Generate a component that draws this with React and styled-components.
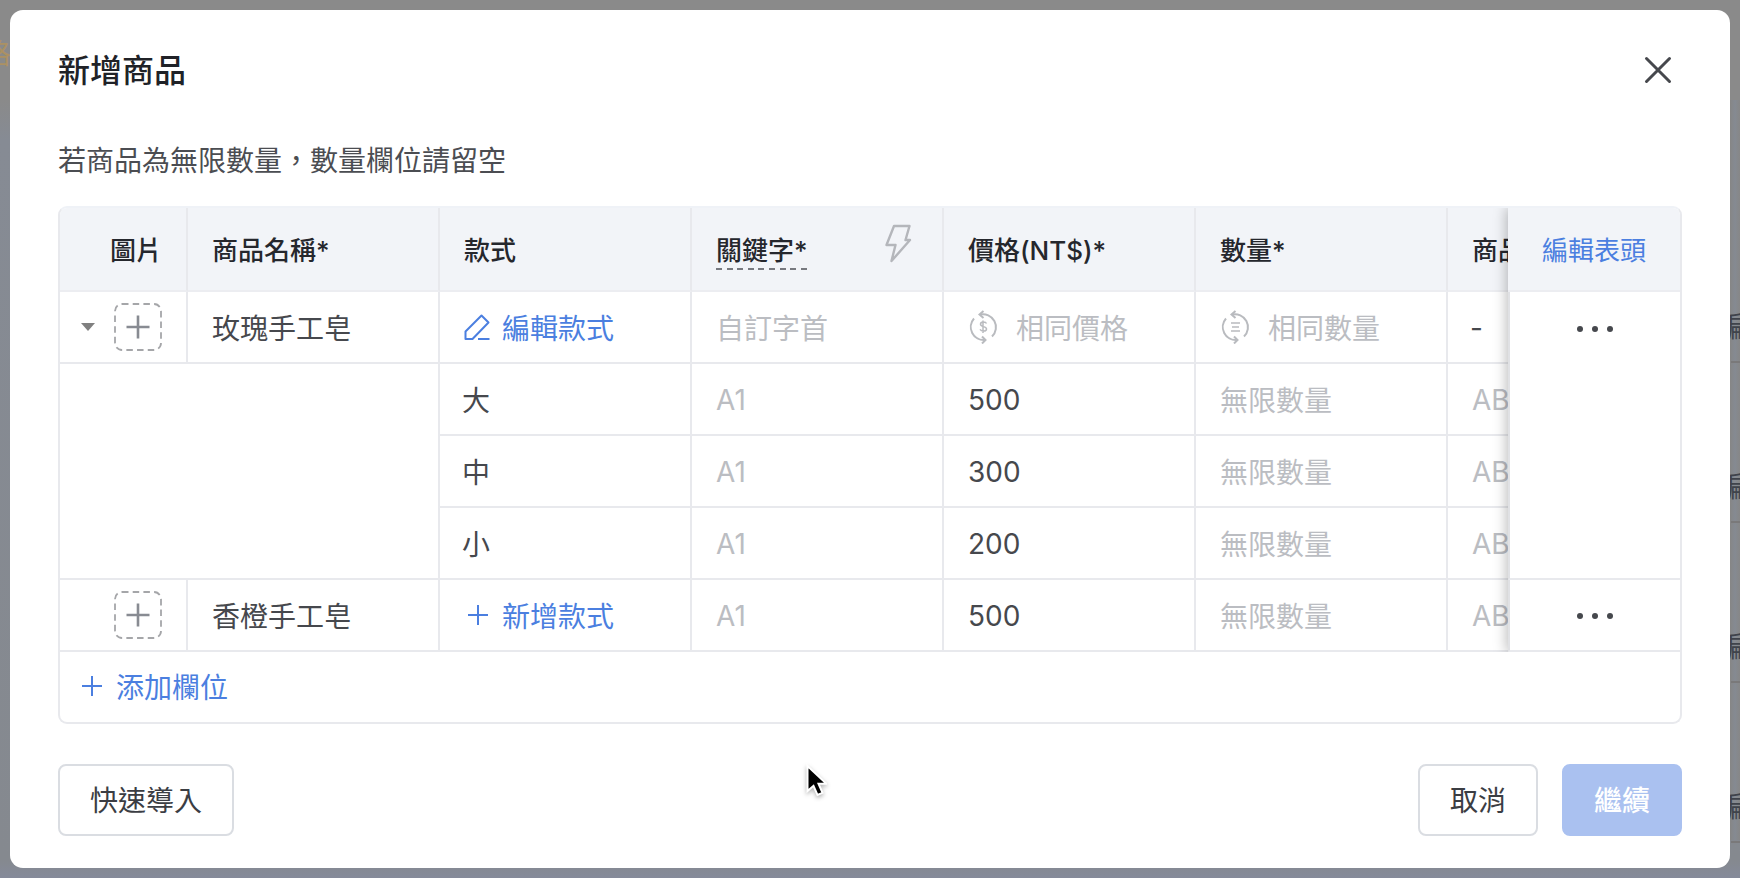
import styled, { createGlobalStyle, css } from "styled-components";

const GlobalStyle = createGlobalStyle`
  * {
    box-sizing: border-box;
  }
  body {
    margin: 0;
    overflow: hidden;
    font-family: Inter, "Noto Sans CJK TC", sans-serif;
  }
  button {
    font-family: inherit;
    cursor: pointer;
  }
`;

const Overlay = styled.div`
  position: relative;
  width: 1740px;
  height: 878px;
  padding: 10px;
  overflow: hidden;
  background: linear-gradient(#8a8a8a 0, #8a8a8a 100px, #868b94 140px, #85898f 860px, #858a9a 100%);
`;

const Behind = styled.div`
  position: absolute;
  top: ${({ $top }) => $top}px;
  left: ${({ $left }) => $left}px;
  font-size: 28px;
  line-height: 28px;
  white-space: nowrap;
  color: ${({ $color }) => $color || "#3f434b"};
`;

const BehindSide = styled.div`
  position: absolute;
  top: 100px;
  right: 0;
  width: 10px;
  height: 740px;
  background: linear-gradient(90deg, #868686, #858a92 50%, #878787);
`;

const BehindLine = styled.div`
  position: absolute;
  top: ${({ $top }) => $top}px;
  right: 0;
  width: 9px;
  height: 2px;
  background: #7a797a;
`;

const Modal = styled.div`
  position: relative;
  display: flex;
  flex-direction: column;
  width: 1720px;
  height: 858px;
  padding: 37px 48px 32px;
  border-radius: 13px;
  background: #fff;
`;

const Header = styled.div`
  display: flex;
  align-items: center;
  justify-content: space-between;
  height: 48px;
  h1 {
    margin: 0;
    font-size: 32px;
    line-height: 48px;
    font-weight: 500;
    color: #202227;
  }
`;

const CloseButton = styled.button`
  display: flex;
  padding: 0;
  margin: -2px 9px 0 0;
  border: none;
  background: none;
  color: #46484d;
`;

const Hint = styled.p`
  margin: 44px 0 23px;
  font-size: 28px;
  line-height: 44px;
  color: #4b4d52;
`;

const Table = styled.div`
  height: 518px;
  border: 2px solid #e8e9ed;
  border-top-color: #eff2f7;
  border-radius: 9px;
  overflow: hidden;
`;

const Columns = styled.div`
  display: flex;
  height: 444px;
`;

const Scroll = styled.div`
  width: 1448px;
  overflow: hidden;
`;

const Grid = styled.div`
  display: grid;
  grid-template-columns: 128px repeat(6, 252px);
  grid-template-rows: 84px repeat(5, 72px);
  width: 1640px;
`;

const Cell = styled.div`
  display: flex;
  align-items: center;
  padding: 0 24px;
  border-right: 2px solid #e8e9ed;
  border-bottom: 2px solid #e8e9ed;
  font-size: 28px;
  white-space: nowrap;
  color: ${({ $muted }) => ($muted ? "#bbbdc2" : "#46484d")};
  ${({ $latin }) => $latin && css`
    padding-top: 2px;
  `}
  ${({ $tight }) => $tight && css`
    padding-left: 22px;
  `}
  ${({ $blank }) => $blank && css`
    grid-column: 1 / span 2;
    grid-row: 3 / span 3;
  `}
  ${({ $image }) => $image && css`
    justify-content: flex-end;
  `}
`;

const HeadCell = styled(Cell)`
  justify-content: ${({ $end }) => ($end ? "flex-end" : "space-between")};
  padding-bottom: 2px;
  border-bottom-color: #ecedf1;
  background: #f2f4f8;
  font-size: 26px;
  font-weight: 500;
  color: #25272d;
`;

const Dashed = styled.span`
  height: 38px;
  margin-top: 5px;
  line-height: 37px;
  background: repeating-linear-gradient(90deg, #77797f 0 6px, transparent 6px 10.6px) 0 100% / 100% 2px no-repeat;
`;

const BoltIcon = styled.svg`
  margin: -8px 6px 0 0;
`;

const SyncIcon = styled.svg`
  margin: 0 16px 0 0;
`;

const Caret = styled.span`
  margin-right: 19px;
  border: 7px solid transparent;
  border-top: 8px solid #808080;
  border-bottom: none;
`;

const AddImage = styled.button`
  display: flex;
  align-items: center;
  justify-content: center;
  width: 48px;
  height: 48px;
  padding: 0;
  border: none;
  background: none;
`;

const LinkButton = styled.button`
  display: flex;
  align-items: center;
  padding: 0;
  margin-left: ${({ $indent }) => $indent || 0}px;
  border: none;
  background: none;
  font-size: ${({ $size }) => $size || 28}px;
  color: #4b7fe0;
  svg {
    margin-right: ${({ $gap }) => $gap || 0}px;
  }
`;

const Sticky = styled.div`
  position: relative;
  width: 172px;
  display: grid;
  grid-template-rows: 84px 288px 72px;
  background: #fff;
  box-shadow: -2px 0 12px rgba(0, 0, 0, 0.25);
  clip-path: inset(0 0 0 -20px);
`;

const StickyHead = styled.div`
  display: flex;
  align-items: center;
  justify-content: center;
  padding-bottom: 2px;
  border-bottom: 2px solid #ecedf1;
  background: #f2f4f8;
`;

const StickyCell = styled.div`
  display: flex;
  justify-content: center;
  padding-top: ${({ $top }) => $top || 33}px;
  border-left: 2px solid #e0e1e4;
  border-bottom: 2px solid #e8e9ed;
`;

const TableFoot = styled.div`
  display: flex;
  align-items: center;
  height: 70px;
  padding: 0 21px 2px;
`;

const Footer = styled.div`
  display: flex;
  justify-content: space-between;
  margin-top: 40px;
`;

const Actions = styled.div`
  display: flex;
  gap: 24px;
`;

const Button = styled.button`
  width: ${({ $width }) => $width || 120}px;
  height: 72px;
  padding: 0 0 2px;
  border: 2px solid ${({ $primary }) => ($primary ? "#aac1f0" : "#dadde2")};
  border-radius: 8px;
  background: ${({ $primary }) => ($primary ? "#aac1f0" : "#fff")};
  font-size: 28px;
  font-weight: ${({ $primary }) => ($primary ? 500 : 400)};
  color: ${({ $primary }) => ($primary ? "#fff" : "#3b3d43")};
`;

const Cursor = styled.svg`
  position: absolute;
  top: 753px;
  left: 793px;
  filter: drop-shadow(0 2px 2px rgba(0, 0, 0, 0.3));
`;

const Plus = () => (
  <svg width="22" height="22" viewBox="0 0 22 22" stroke="currentColor" strokeWidth="2">
    <path d="M11 1v20M1 11h20" />
  </svg>
);

const Pencil = () => (
  <svg width="26" height="26" viewBox="0 0 26 26" fill="none" stroke="currentColor" strokeWidth="2" strokeLinejoin="round">
    <path d="M1.500 25v-7.500L17.500 1.500l7 7L8.500 25zM14 25h11.500" />
  </svg>
);

const Sync = ({ children }) => (
  <SyncIcon width="32" height="34" viewBox="0 0 32 34" fill="none" stroke="#b9bbbf" strokeWidth="2">
    <path d="M6 8.500A13 13 0 0 0 17 30M12 4.500A13 13 0 0 1 24 26.500" />
    <path d="M15.500 1l-4 3.500 4 3.500M14 26.500l3.500 3.500-3.500 3.500" />
    {children}
  </SyncIcon>
);

const Dots = () => (
  <svg width="38" height="8" viewBox="0 0 38 8" fill="#46484d">
    <circle cx="4" cy="4" r="3" />
    <circle cx="19" cy="4" r="3" />
    <circle cx="34" cy="4" r="3" />
  </svg>
);

const ImageButton = () => (
  <AddImage>
    <svg width="48" height="48" viewBox="0 0 48 48" fill="none">
      <rect x="1" y="1" width="46" height="46" rx="7" stroke="#a5a6a9" strokeWidth="1.800" strokeDasharray="6.500 4.200" />
      <path d="M24 12.500v23M12.500 24h23" stroke="#888b92" strokeWidth="2.600" />
    </svg>
  </AddImage>
);

const variants = [
  { name: "大", price: 500 },
  { name: "中", price: 300 },
  { name: "小", price: 200 },
];

const Variant = ({ name, price }) => (
  <>
    <Cell $tight>{name}</Cell>
    <Cell $muted $latin>A1</Cell>
    <Cell $latin>{price}</Cell>
    <Cell $muted>無限數量</Cell>
    <Cell $muted $latin>ABC</Cell>
  </>
);

function App() {
  return (
    <Overlay>
      <GlobalStyle />
      <Behind $top={40} $left={-17} $color="#ab9163">格</Behind>
      <BehindSide />
      {[313, 473, 633, 793].map((top) => (
        <Behind key={top} $top={top} $left={1718}>編</Behind>
      ))}
      {[361, 521, 681, 841].map((top) => (
        <BehindLine key={top} $top={top} />
      ))}

      <Modal>
        <Header>
          <h1>新增商品</h1>
          <CloseButton aria-label="關閉">
            <svg width="30" height="30" viewBox="0 0 30 30" stroke="currentColor" strokeWidth="3" strokeLinecap="round">
              <path d="M3.500 3.500l23 23M26.500 3.500L3.500 26.500" />
            </svg>
          </CloseButton>
        </Header>
        <Hint>若商品為無限數量，數量欄位請留空</Hint>

        <Table>
          <Columns>
            <Scroll>
              <Grid>
                <HeadCell $end>圖片</HeadCell>
                <HeadCell>商品名稱*</HeadCell>
                <HeadCell>款式</HeadCell>
                <HeadCell>
                  <Dashed>關鍵字*</Dashed>
                  <BoltIcon width="28" height="40" viewBox="0 0 28 40" fill="none" stroke="#b4b6bb" strokeWidth="2.400" strokeLinejoin="round">
                    <path d="M10 2h15.500l-4 14H26L7.500 37l4-16H2.500z" />
                  </BoltIcon>
                </HeadCell>
                <HeadCell>價格(NT$)*</HeadCell>
                <HeadCell>數量*</HeadCell>
                <HeadCell>商品編號</HeadCell>

                <Cell $image>
                  <Caret />
                  <ImageButton />
                </Cell>
                <Cell>玫瑰手工皂</Cell>
                <Cell>
                  <LinkButton $gap={12}>
                    <Pencil />
                    編輯款式
                  </LinkButton>
                </Cell>
                <Cell $muted>自訂字首</Cell>
                <Cell $muted>
                  <Sync>
                    <path d="M18.500 13.500c-1-2-6-2-6 .8s6 1.800 6 4.600-5 2.800-6.500.5M15 10.500v12.500" strokeWidth="1.500" />
                  </Sync>
                  相同價格
                </Cell>
                <Cell $muted>
                  <Sync>
                    <path d="M11 13h9M12 17h7M11 21h9" strokeWidth="1.600" />
                  </Sync>
                  相同數量
                </Cell>
                <Cell $latin $tight>-</Cell>

                <Cell $blank />
                {variants.map((item) => (
                  <Variant key={item.name} {...item} />
                ))}

                <Cell $image>
                  <ImageButton />
                </Cell>
                <Cell>香橙手工皂</Cell>
                <Cell>
                  <LinkButton $gap={13} $indent={3}>
                    <Plus />
                    新增款式
                  </LinkButton>
                </Cell>
                <Cell $muted $latin>A1</Cell>
                <Cell $latin>500</Cell>
                <Cell $muted>無限數量</Cell>
                <Cell $muted $latin>ABC</Cell>
              </Grid>
            </Scroll>
            <Sticky>
              <StickyHead>
                <LinkButton $size={26}>編輯表頭</LinkButton>
              </StickyHead>
              <StickyCell>
                <Dots />
              </StickyCell>
              <StickyCell $top={32}>
                <Dots />
              </StickyCell>
            </Sticky>
          </Columns>
          <TableFoot>
            <LinkButton $gap={13}>
              <Plus />
              添加欄位
            </LinkButton>
          </TableFoot>
        </Table>

        <Footer>
          <Button $width={176}>快速導入</Button>
          <Actions>
            <Button>取消</Button>
            <Button $primary>繼續</Button>
          </Actions>
        </Footer>
      </Modal>

      <Cursor width="34" height="46" viewBox="0 0 34 46">
        <path d="M14.500 13v25l6-5.200 4 9.200 5-2.200-4-9h8z" fill="#000" stroke="#fff" strokeWidth="2" />
      </Cursor>
    </Overlay>
  );
}

export default App;
